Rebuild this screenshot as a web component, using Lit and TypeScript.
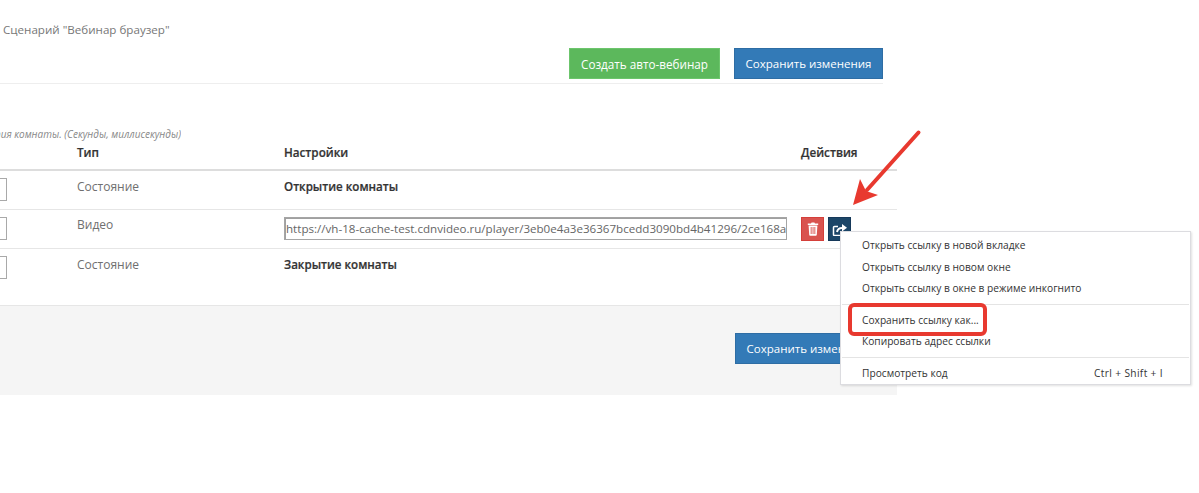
import { LitElement, html, css } from "lit";
import { customElement } from "lit/decorators.js";

@customElement("app-root")
export class AppRoot extends LitElement {
  static styles = css`
    :host { display: block; position: relative; width: 1199px; height: 493px; overflow: hidden; background: #fff;
      font-family: "Open Sans", "Noto Sans", sans-serif; font-size: 12px; color: #6f6f6f; }
    .page { width: 897px; display: flex; flex-direction: column; }
    .title { height: 48px; padding: 22px 0 0 3px; box-sizing: border-box; line-height: 16px; font-size: 11.6px; color: #777; }
    .toolbar { width: 883px; height: 36px; box-sizing: border-box; display: flex; justify-content: flex-end; gap: 14px; border-bottom: 1px solid #eee; }
    .btn { height: 31px; box-sizing: border-box; display: flex; align-items: center; justify-content: center; color: #fff; font-size: 11.5px; border: 1px solid; white-space: nowrap; }
    .green { width: 151px; background: #5cb85c; border-color: #6cc56c; font-size: 11.7px; }
    .blue { width: 149px; background: #337ab7; border-color: #2e6da4; }
    .hint { width: 181px; height: 16px; margin-top: 42px; display: flex; justify-content: flex-end; overflow: hidden; white-space: nowrap; font-size: 10px; font-style: italic; line-height: 16px; color: #888; }
    .row { display: grid; grid-template-columns: 77px 207px 517px 96px; }
    .head { height: 26px; padding-top: 1px; border-bottom: 2px solid #ddd; font-weight: 600; color: #333; line-height: 18px; font-size: 11.7px; -webkit-text-stroke: 0.2px #333; }
    .body { height: 38px; border-bottom: 1px solid #e6e6e6; line-height: 16px; }
    .last { border-bottom: 0; height: 56px; }
    .cell { padding-top: 8px; }
    .cell.v { padding-top: 7px; }
    .cell.b { font-weight: 600; color: #333; font-size: 11.6px; -webkit-text-stroke: 0.2px #333; }
    .num { width: 27px; height: 23px; margin: -1px 0 0 -20px; box-sizing: border-box; border: 1px solid #a9a9a9; background: #fff; }
    .num.v { margin-top: 0; }
    .url { width: 503px; height: 23px; box-sizing: border-box; border: 1px solid #a5a5a5; box-shadow: inset 1px 1px 0 #a0a0a0; padding: 0 1px; line-height: 21px; color: #666; font-size: 11.6px; overflow: hidden; white-space: nowrap; }
    .urlcell { padding-top: 7px; }
    .actions { display: flex; gap: 4px; padding-top: 7px; }
    .act { width: 23px; height: 24px; display: flex; align-items: center; justify-content: center; box-sizing: border-box; }
    .del { background: #d9534f; border: 1px solid #d43f3a; }
    .ext { background: #1c4668; border: 1px solid #16395a; }
    .foot { height: 90px; box-sizing: border-box; background: #f5f5f5; border-top: 1px solid #e6e6e6; padding: 27px 0 0 735px; }
    .menu { position: absolute; left: 840px; top: 231px; width: 351px; height: 154px; box-sizing: border-box; background: #fff; border: 1px solid #dcdce0; box-shadow: 1px 1px 2px rgba(0,0,0,.12); padding-top: 3px; font-size: 10.2px; color: #333; }
    .mi { height: 21.5px; line-height: 21.5px; padding: 0 27px 0 21px; display: flex; justify-content: space-between; white-space: nowrap; }
    .keys { letter-spacing: 0.35px; }
    .sep { height: 1px; background: #e4e4e4; margin: 4.5px 1px 4.75px 1px; }
    .sep2 { margin: 4px 1px 5px 1px; }
    .mark { position: absolute; left: 848px; top: 303px; width: 139px; height: 33px; box-sizing: border-box; border: 4px solid #e8392f; border-radius: 6px; }
    .arrow { position: absolute; left: 840px; top: 120px; }
  `;

  render() {
    return html`
      <div class="page">
        <div class="title">Сценарий "Вебинар браузер"</div>
        <div class="toolbar">
          <div class="btn green">Создать авто-вебинар</div>
          <div class="btn blue">Сохранить изменения</div>
        </div>
        <div class="hint">Время открытия комнаты. (Секунды, миллисекунды)</div>
        <div class="row head">
          <div></div><div>Тип</div><div>Настройки</div><div>Действия</div>
        </div>
        <div class="row body">
          <div class="cell"><div class="num"></div></div>
          <div class="cell">Состояние</div>
          <div class="cell b">Открытие комнаты</div>
          <div></div>
        </div>
        <div class="row body">
          <div class="cell v"><div class="num v"></div></div>
          <div class="cell v">Видео</div>
          <div class="urlcell"><div class="url">https://vh-18-cache-test.cdnvideo.ru/player/3eb0e4a3e36367bcedd3090bd4b41296/2ce168a4c1d7</div></div>
          <div class="actions">
            <div class="act del">
              <svg width="12" height="14" viewBox="0 0 12 14" fill="#fff"><path d="M4 1.600 4.600.4h2.800L8 1.600h3.200v1.300H.8V1.600zM1.600 3.600h8.800l-.6 9.200c0 .5-.4.9-.9.9H3.100c-.5 0-.9-.4-.9-.9zM3.700 5v7h.9V5zm1.900 0v7h.9V5zm1.800 0v7h.9V5z" fill-rule="evenodd"/></svg>
            </div>
            <div class="act ext">
              <svg width="15" height="14" viewBox="0 0 15 14" fill="none" stroke="#fff" stroke-width="1.500"><path d="M10.500 9v3.500a1 1 0 0 1-1 1H2.500a1 1 0 0 1-1-1V5.500a1 1 0 0 1 1-1H6"/><path d="M5 10C5.500 7.500 7.500 6 10 6" stroke-width="2"/><path d="M10 2 15 5.700 10 9.500z" fill="#fff" stroke="none"/></svg>
            </div>
          </div>
        </div>
        <div class="row body last">
          <div class="cell"><div class="num"></div></div>
          <div class="cell">Состояние</div>
          <div class="cell b">Закрытие комнаты</div>
          <div></div>
        </div>
        <div class="foot"><div class="btn blue">Сохранить изменения</div></div>
      </div>

      <svg class="arrow" width="90" height="95" viewBox="0 0 90 95">
        <path d="M78.500 12.500 27 70" stroke="#e8392f" stroke-width="4" stroke-linecap="round" fill="none"/>
        <path d="M13 85 20 59 26 71 38 75z" fill="#e8392f"/>
      </svg>

      <div class="menu">
        <div class="mi">Открыть ссылку в новой вкладке</div>
        <div class="mi">Открыть ссылку в новом окне</div>
        <div class="mi">Открыть ссылку в окне в режиме инкогнито</div>
        <div class="sep"></div>
        <div class="mi">Сохранить ссылку как...</div>
        <div class="mi">Копировать адрес ссылки</div>
        <div class="sep sep2"></div>
        <div class="mi"><span>Просмотреть код</span><span class="keys">Ctrl + Shift + I</span></div>
      </div>
      <div class="mark"></div>
    `;
  }
}
